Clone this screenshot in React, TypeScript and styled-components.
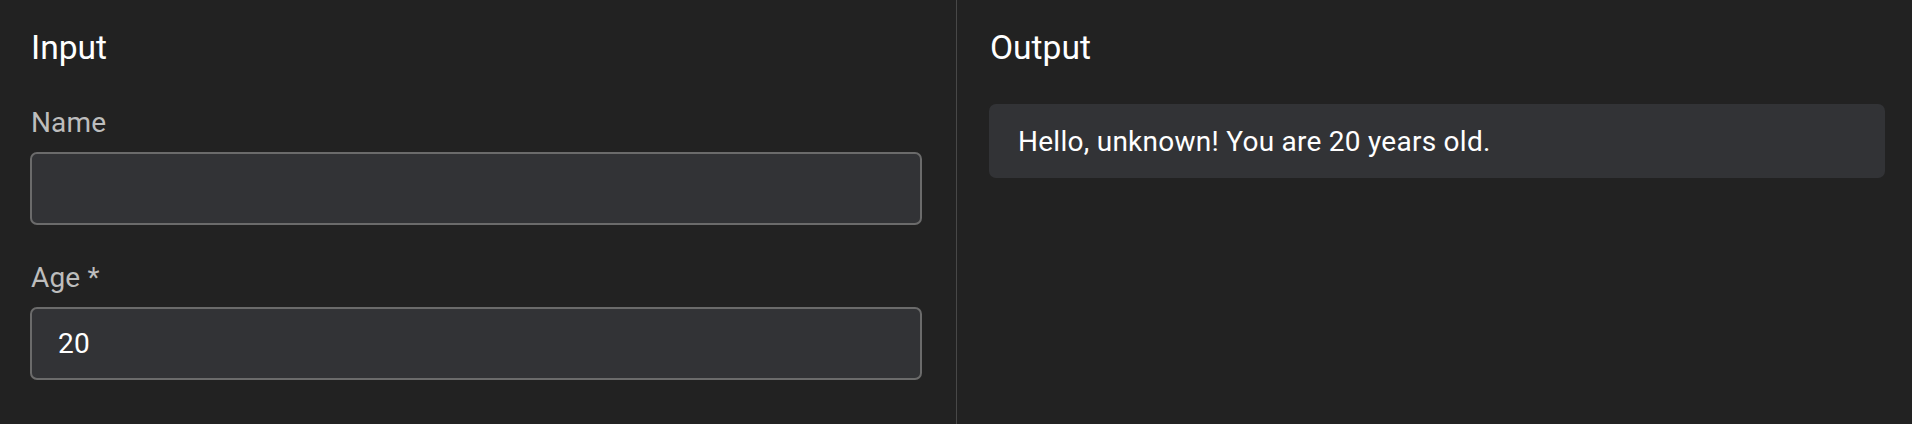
import React from "react";
import styled, { createGlobalStyle } from "styled-components";

const GlobalStyle = createGlobalStyle`
  html, body {
    margin: 0;
    padding: 0;
    background: #222222;
  }
  body {
    font-family: Roboto, "Liberation Sans", Arial, sans-serif;
    color: #ffffff;
  }
  * { box-sizing: border-box; }
`;

const Layout = styled.div`
  display: grid;
  grid-template-columns: 956px 1fr;
  height: 424px;
  background: #222222;
`;

const Panel = styled.section<{ $divider?: boolean; $pl: number; $pr: number }>`
  display: flex;
  flex-direction: column;
  padding: 28px ${(p) => p.$pr}px 0 ${(p) => p.$pl}px;
  border-left: ${(p) => (p.$divider ? "1px solid #484848" : "none")};
`;

const Heading = styled.h2`
  margin: 0 0 0 1px;
  font-size: 33.6px;
  line-height: 40px;
  font-weight: 400;
  color: #ffffff;
`;

const Field = styled.div<{ $top: number }>`
  display: flex;
  flex-direction: column;
  margin-top: ${(p) => p.$top}px;
`;

const Label = styled.label`
  font-size: 28px;
  line-height: 32px;
  letter-spacing: 0.15px;
  color: #bdbdbd;
  margin-left: 1px;
  margin-bottom: 13px;
`;

const Input = styled.input`
  height: 73px;
  width: 100%;
  background: #323336;
  border: 2px solid #6b6b6b;
  border-radius: 7px;
  color: #ffffff;
  font-family: Roboto, "Liberation Sans", Arial, sans-serif;
  font-size: 28px;
  letter-spacing: 0.26px;
  padding: 0 26px;
  outline: none;
`;

const OutputBox = styled.div`
  margin-top: 36px;
  height: 74px;
  background: #323336;
  border-radius: 7px;
  display: flex;
  align-items: center;
  padding: 0 29px;
  font-size: 28px;
  letter-spacing: 0.26px;
  color: #ffffff;
`;

export default function App() {
  return (
    <>
      <GlobalStyle />
      <Layout>
        <Panel $pl={30} $pr={34}>
          <Heading>Input</Heading>
          <Field $top={39}>
            <Label>Name</Label>
            <Input defaultValue="" />
          </Field>
          <Field $top={37}>
            <Label>Age *</Label>
            <Input defaultValue="20" />
          </Field>
        </Panel>
        <Panel $divider $pl={32} $pr={27}>
          <Heading>Output</Heading>
          <OutputBox>Hello, unknown! You are 20 years old.</OutputBox>
        </Panel>
      </Layout>
    </>
  );
}
